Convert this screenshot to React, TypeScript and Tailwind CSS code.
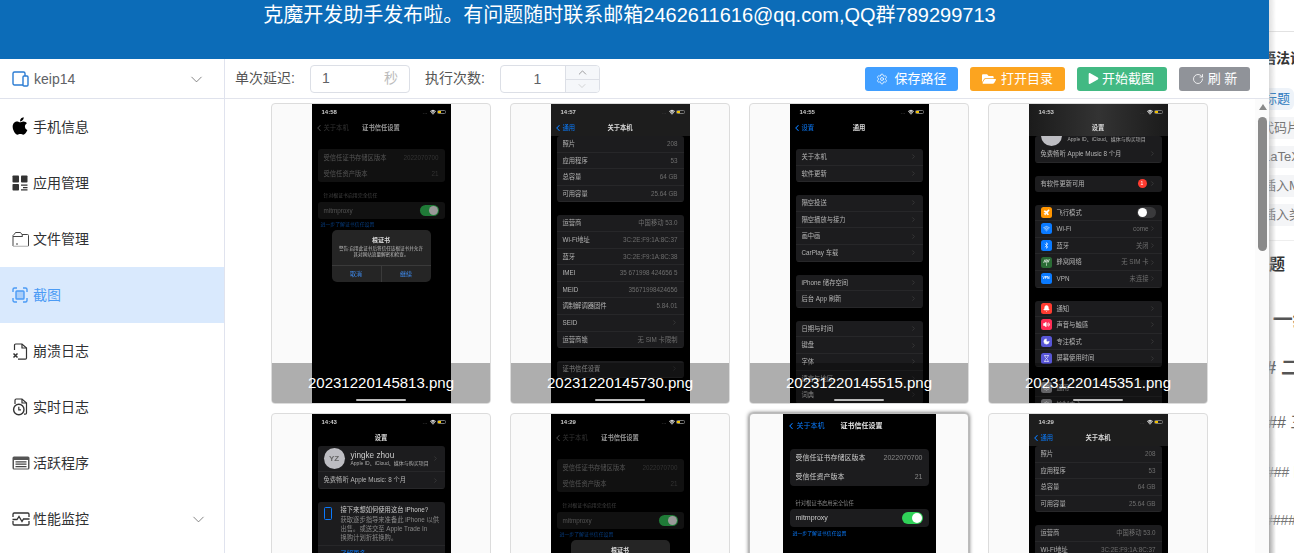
import type { ReactNode } from 'react';
import { ChevronDown, ChevronUp, ChevronLeft, ChevronRight, Settings, RotateCw, Plane, Wifi, Bluetooth, Bell, Volume2, Moon, Hourglass, Antenna } from 'lucide-react';
import { FaApple, FaFolderOpen, FaPlay } from 'react-icons/fa';

/* ---------- sidebar icons ---------- */
const DeviceIcon = () => (
  <svg width="17" height="16" viewBox="0 0 17 16" fill="none" stroke="#2b7cd3" strokeWidth="1.4">
    <path d="M11 14H2.5A1.5 1.5 0 0 1 1 12.5v-10A1.5 1.5 0 0 1 2.5 1h9A1.5 1.5 0 0 1 13 2.5V5" />
    <rect x="11" y="5" width="5" height="10" rx="1" />
  </svg>
);
const AppsIcon = () => (
  <svg width="16" height="16" viewBox="0 0 16 16" fill="#333">
    <rect x="0.5" y="0.5" width="6.5" height="7" rx="0.8" />
    <rect x="9" y="0.5" width="6.5" height="7" rx="0.8" />
    <rect x="0.5" y="9" width="6.5" height="6.5" rx="0.8" />
    <path d="M9 9.5h6.5v1.2H9zM11 12h4.5v1.2H11zM9 14.3h6.5v1.2H9z" />
  </svg>
);
const FolderIcon = () => (
  <svg width="17" height="16" viewBox="0 0 17 16" fill="none" stroke="#444" strokeWidth="1">
    <path d="M1 15V4.5L2.5 3l1-1.5h5L10 3.5h5.5a1 1 0 0 1 1 1V15" />
    <path d="M1 5.5h9.5L10 3.5" />
    <path d="M1 15.3h15.5" stroke="#bbb" strokeWidth="1.2" />
    <path d="M4 13h2" />
  </svg>
);
const ScanIcon = () => (
  <svg width="16" height="16" viewBox="0 0 16 16" fill="none" stroke="#4b9bf5" strokeWidth="1.4">
    <path d="M1 5V2.5A1.5 1.5 0 0 1 2.5 1H5M11 1h2.5A1.5 1.5 0 0 1 15 2.5V5M15 11v2.5a1.5 1.5 0 0 1-1.5 1.5H11M5 15H2.5A1.5 1.5 0 0 1 1 13.5V11" />
    <rect x="4" y="4" width="8" height="8" rx="0.8" fill="#a9cdf8" />
  </svg>
);
const CrashIcon = () => (
  <svg width="16" height="17" viewBox="0 0 16 17" fill="none" stroke="#333" strokeWidth="1.2">
    <path d="M2.5 7V2.2A1.2 1.2 0 0 1 3.7 1H10l4.5 4v10a1.2 1.2 0 0 1-1.2 1.2H6" />
    <path d="M10 1v4h4.5" />
    <path d="M1.5 10.5l4 4M5.5 10.5l-4 4" strokeWidth="1.5" />
  </svg>
);
const ClockFileIcon = () => (
  <svg width="16" height="18" viewBox="0 0 16 18" fill="none" stroke="#333" strokeWidth="1.2">
    <path d="M3 6V2.2A1.2 1.2 0 0 1 4.2 1H10l4.5 4v10a1.2 1.2 0 0 1-1.2 1.2H12" />
    <path d="M10 1v4h4.5" />
    <circle cx="6.8" cy="11.5" r="5.2" strokeWidth="1.4" />
    <path d="M6.8 8.8v3h2.2" />
  </svg>
);
const ListIcon = () => (
  <svg width="18" height="14" viewBox="0 0 18 14" fill="none">
    <rect x="0.5" y="0.5" width="17" height="13" rx="1.5" fill="#555" />
    <rect x="2" y="4" width="14" height="8.5" fill="#fff" />
    <path d="M3.5 5.8h11M3.5 8.2h11M3.5 10.6h11" stroke="#444" strokeWidth="1.2" />
  </svg>
);
const PulseIcon = () => (
  <svg width="18" height="14" viewBox="0 0 18 14" fill="none" stroke="#333" strokeWidth="1.3">
    <path d="M1 5V2.2A1.2 1.2 0 0 1 2.2 1h13.6A1.2 1.2 0 0 1 17 2.2V5M1 9v2.8A1.2 1.2 0 0 0 2.2 13h13.6a1.2 1.2 0 0 0 1.2-1.2V9" />
    <path d="M0.5 7.5H5l2-3 3 5 1.5-2.5h6" />
  </svg>
);

const menu = [
  { label: '手机信息', icon: <FaApple size={20} color="#000" className="-ml-[2px] -mt-[3px]" /> },
  { label: '应用管理', icon: <AppsIcon /> },
  { label: '文件管理', icon: <FolderIcon /> },
  { label: '截图', icon: <ScanIcon />, active: true },
  { label: '崩溃日志', icon: <CrashIcon /> },
  { label: '实时日志', icon: <ClockFileIcon /> },
  { label: '活跃程序', icon: <ListIcon /> },
  { label: '性能监控', icon: <PulseIcon />, arrow: true },
];

function Sidebar() {
  return (
    <aside className="w-[225px] shrink-0 border-r border-[#e0e3ee] bg-white">
      <div className="h-[40px] flex items-center pl-[12px] pr-[18px] pt-[1px] border-b border-[#dfe2ec] text-[14px] text-[#606266]">
        <DeviceIcon />
        <span className="ml-[5px] flex-1">keip14</span>
        <ChevronDown size={19} strokeWidth={1} className="text-[#666]" />
      </div>
      {menu.map((m) => (
        <div
          key={m.label}
          className={
            m.active
              ? 'h-[56px] flex items-center pl-[12px] pr-[16px] text-[14px] bg-[#d9e9fd] text-[#4b9bf5]'
              : 'h-[56px] flex items-center pl-[12px] pr-[16px] text-[14px] text-[#303133]'
          }
        >
          <span className="w-[21px] flex justify-start">{m.icon}</span>
          <span className="flex-1">{m.label}</span>
          {m.arrow && <ChevronDown size={19} strokeWidth={1} className="text-[#666]" />}
        </div>
      ))}
    </aside>
  );
}

/* ---------- toolbar ---------- */
function Toolbar() {
  return (
    <div className="h-[40px] shrink-0 flex items-center pl-[10px] pr-[19px] border-b border-[#e2e4ec] text-[14px] text-[#555]">
      <span>单次延迟:</span>
      <div className="ml-[15px] w-[100px] h-[28px] flex items-center justify-between pl-[11px] pr-[11px] border border-[#dcdfe6] rounded-[4px] text-[#606266]">
        <span>1</span>
        <span className="text-[#bbb]">秒</span>
      </div>
      <span className="ml-[15px]">执行次数:</span>
      <div className="ml-[15px] w-[100px] h-[28px] flex border border-[#dcdfe6] rounded-[4px] text-[#606266] overflow-hidden">
        <span className="flex-1 text-center leading-[26px] pl-[9px]">1</span>
        <div className="w-[34px] flex flex-col border-l border-[#dcdfe6] bg-[#f5f7fa] text-[#777]">
          <div className="h-[15px] flex items-center justify-center border-b border-[#dcdfe6]"><ChevronUp size={13} strokeWidth={1.3} /></div>
          <div className="flex-1 flex items-center justify-center text-[#bbb]"><ChevronDown size={12} strokeWidth={1.2} /></div>
        </div>
      </div>
      <div className="ml-auto flex gap-[12px] text-[13px] text-white">
        <button className="w-[93px] h-[24px] rounded-[3px] bg-[#409eff] flex items-center justify-center gap-[6px]"><Settings size={12} strokeWidth={1.5} />保存路径</button>
        <button className="w-[95px] h-[24px] rounded-[3px] bg-[#fca41f] flex items-center justify-center gap-[5px]"><FaFolderOpen size={14} />打开目录</button>
        <button className="w-[90px] h-[24px] rounded-[3px] bg-[#42b983] flex items-center justify-center gap-[3px] pr-[2px]"><FaPlay size={11} />开始截图</button>
        <button className="w-[71px] h-[24px] rounded-[3px] bg-[#909399] flex items-center justify-center gap-[4px]"><RotateCw size={12} strokeWidth={1.6} />刷 新</button>
      </div>
    </div>
  );
}

/* ---------- phone screenshots ---------- */
function StatusBar({ time }: { time: string }) {
  return (
    <div className="h-[16px] flex items-center justify-between pl-[10px] pr-[5px] text-[6px] font-bold text-[#ccc]">
      <span>{time}</span>
      <span className="flex items-center gap-[1px]">
        <span className="text-[#333] mr-[1px]">...</span>
        <Wifi size={6} strokeWidth={3.5} className="text-white" />
        <span className="w-[9px] h-[4.5px] border border-[#777] rounded-[1.5px] flex">
          <span className="w-[3px] bg-[#f2c200]" />
        </span>
      </span>
    </div>
  );
}

function NavBar({ back, title, dim }: { back: string; title: string; dim?: boolean }) {
  return (
    <div className="relative h-[16px] flex items-center pl-[2px] text-[6.300px]">
      <ChevronLeft size={10} strokeWidth={2.5} className={dim ? 'text-[#444]' : 'text-[#0a7cff]'} />
      <span className={dim ? 'text-[#333]' : 'text-[#0a7cff]'}>{back}</span>
      <span className={dim ? 'absolute left-0 right-0 text-center font-bold text-[#999]' : 'absolute left-0 right-0 text-center font-bold text-[#ddd]'}>{title}</span>
    </div>
  );
}

function Group({ children, dim }: { children: ReactNode; dim?: boolean }) {
  return <div className={dim ? 'mx-[6px] rounded-[3px] bg-[#111] overflow-hidden' : 'mx-[6px] rounded-[3px] bg-[#1c1c1e] overflow-hidden'}>{children}</div>;
}

function Row({ label, value, arrow, dim, icon }: { label: string; value?: string; arrow?: boolean; dim?: boolean; icon?: ReactNode }) {
  return (
    <div className={dim ? 'h-[16.600px] flex items-center pl-[6px] pr-[6px] text-[6.300px] text-[#555]' : 'h-[16.600px] flex items-center pl-[6px] pr-[6px] text-[6.300px] text-[#b4b4b4] border-b border-white/5'}>
      {icon}
      <span className="flex-1 whitespace-nowrap">{label}</span>
      {value && <span className={dim ? 'text-[#333] whitespace-nowrap' : 'text-[#6e6e6e] whitespace-nowrap'}>{value}</span>}
      {arrow && <ChevronRight size={7} strokeWidth={2} className="text-[#4a4a4a] shrink-0" />}
    </div>
  );
}

function Tile({ color, children }: { color: string; children: ReactNode }) {
  return (
    <span className="w-[11px] h-[11px] rounded-[2.500px] mr-[5px] flex items-center justify-center text-white shrink-0" style={{ backgroundColor: color }}>
      {children}
    </span>
  );
}

function Phone({ children }: { children: ReactNode }) {
  return <div className="relative w-[139px] h-[300px] bg-black overflow-hidden blur-[0.450px]">{children}</div>;
}

function TrustPhone({ time }: { time: string }) {
  return (
    <Phone>
      <StatusBar time={time} />
      <NavBar back="关于本机" title="证书信任设置" dim />
      <div className="h-[13px]" />
      <Group dim>
        <Row dim label="受信任证书存储区版本" value="2022070700" />
        <Row dim label="受信任资产版本" value="21" />
      </Group>
      <p className="mt-[8px] h-[12px] leading-[12px] pl-[12px] text-[4.900px] text-[#444]">针对根证书启用完全信任</p>
      <Group dim>
        <div className="h-[17px] flex items-center justify-between pl-[6px] pr-[6px] text-[6.300px] text-[#555]">
          <span>mitmproxy</span>
          <span className="w-[19px] h-[11px] rounded-full bg-[#1f7a37] flex items-center justify-end pr-[1px]">
            <span className="w-[9px] h-[9px] rounded-full bg-[#999]" />
          </span>
        </div>
      </Group>
      <p className="h-[12px] leading-[12px] pl-[9px] text-[4.900px] text-[#063d80]">进一步了解证书信任设置</p>
      <div className="absolute left-[20px] top-[126px] w-[99px] h-[52px] rounded-[5px] bg-[#252525] flex flex-col items-center text-center">
        <p className="mt-[6px] text-[6px] font-bold text-[#ddd]">根证书</p>
        <p className="mt-[1px] px-[6px] text-[4.600px] leading-[6px] text-[#bbb]">警告:启用此证书后将信任该根证书并允许其对网站流量解密和检查。</p>
        <div className="mt-auto w-full h-[17px] flex border-t border-[#3a3a3a] text-[6px] text-[#3f8cf0]">
          <span className="flex-1 leading-[16px] border-r border-[#3a3a3a]">取消</span>
          <span className="flex-1 leading-[16px]">继续</span>
        </div>
      </div>
    </Phone>
  );
}

function AboutPhone({ time }: { time: string }) {
  return (
    <Phone>
      <div className="h-[32px] bg-[#1d1d1d]">
        <StatusBar time={time} />
        <NavBar back="通用" title="关于本机" />
      </div>
      <div className="flex flex-col gap-[13px]">
        <Group>
          <Row label="照片" value="208" />
          <Row label="应用程序" value="53" />
          <Row label="总容量" value="64 GB" />
          <Row label="可用容量" value="25.64 GB" />
        </Group>
        <Group>
          <Row label="运营商" value="中国移动 53.0" />
          <Row label="Wi-Fi地址" value="3C:2E:F9:1A:8C:37" />
          <Row label="蓝牙" value="3C:2E:F9:1A:8C:38" />
          <Row label="IMEI" value="35 671998 424656 5" />
          <Row label="MEID" value="35671998424656" />
          <Row label="调制解调器固件" value="5.84.01" />
          <Row label="SEID" arrow />
          <Row label="运营商锁" value="无 SIM 卡限制" />
        </Group>
        <Group>
          <Row label="证书信任设置" arrow />
        </Group>
      </div>
    </Phone>
  );
}

function GeneralPhone() {
  return (
    <Phone>
      <StatusBar time="14:55" />
      <NavBar back="设置" title="通用" />
      <div className="h-[13px]" />
      <div className="flex flex-col gap-[13px]">
        <Group>
          <Row label="关于本机" arrow />
          <Row label="软件更新" arrow />
        </Group>
        <Group>
          <Row label="隔空投送" arrow />
          <Row label="隔空播放与接力" arrow />
          <Row label="画中画" arrow />
          <Row label="CarPlay 车载" arrow />
        </Group>
        <Group>
          <Row label="iPhone 储存空间" arrow />
          <Row label="后台 App 刷新" arrow />
        </Group>
        <Group>
          <Row label="日期与时间" arrow />
          <Row label="键盘" arrow />
          <Row label="字体" arrow />
          <Row label="语言与地区" arrow />
          <Row label="词典" arrow />
        </Group>
      </div>
    </Phone>
  );
}

function SettingsPhone() {
  return (
    <Phone>
      <div className="h-[32px] bg-gradient-to-r from-[#1b1b1b] via-[#333] to-[#1b1b1b]">
        <StatusBar time="14:53" />
        <div className="h-[16px] text-center leading-[16px] text-[6.300px] font-bold text-[#ddd]">设置</div>
      </div>
      <Group>
        <div className="h-[10px] flex overflow-hidden pl-[6px]">
          <span className="w-[21px] h-[21px] -mt-[11px] rounded-full bg-[#bdbdc2] shrink-0" />
          <span className="ml-[6px] text-[5px] leading-[6px] text-[#aaa] whitespace-nowrap">Apple ID、iCloud、媒体与购买项目</span>
        </div>
        <Row label="免费畅听 Apple Music 8 个月" arrow />
      </Group>
      <div className="h-[13px]" />
      <Group>
        <div className="h-[16px] flex items-center pl-[6px] pr-[6px] text-[6.300px] text-[#b4b4b4]">
          <span className="flex-1">有软件更新可用</span>
          <span className="w-[9px] h-[9px] rounded-full bg-[#ff3b30] text-white text-[5px] text-center leading-[9px] mr-[2px]">1</span>
          <ChevronRight size={7} strokeWidth={2} className="text-[#4a4a4a]" />
        </div>
      </Group>
      <div className="h-[13px]" />
      <Group>
        <div className="h-[16.600px] flex items-center pl-[6px] pr-[6px] text-[6.300px] text-[#b4b4b4] border-b border-white/5">
          <Tile color="#ff9500"><Plane size={7} fill="white" /></Tile>
          <span className="flex-1">飞行模式</span>
          <span className="w-[19px] h-[11px] rounded-full bg-[#3a3a3c] flex items-center pl-[1px]"><span className="w-[9px] h-[9px] rounded-full bg-white" /></span>
        </div>
        <Row icon={<Tile color="#0a7aff"><Wifi size={7} /></Tile>} label="Wi-Fi" value="come" arrow />
        <Row icon={<Tile color="#0a7aff"><Bluetooth size={7} /></Tile>} label="蓝牙" value="关闭" arrow />
        <Row icon={<Tile color="#2a6b35"><Antenna size={7} /></Tile>} label="蜂窝网络" value="无 SIM 卡" arrow />
        <Row icon={<Tile color="#0a7aff"><span className="text-[3.500px] font-bold">VPN</span></Tile>} label="VPN" value="未连接" arrow />
      </Group>
      <div className="h-[13px]" />
      <Group>
        <Row icon={<Tile color="#ff3b30"><Bell size={7} fill="white" /></Tile>} label="通知" arrow />
        <Row icon={<Tile color="#ff2d55"><Volume2 size={7} fill="white" /></Tile>} label="声音与触感" arrow />
        <Row icon={<Tile color="#5856d6"><Moon size={7} fill="white" /></Tile>} label="专注模式" arrow />
        <Row icon={<Tile color="#5856d6"><Hourglass size={7} /></Tile>} label="屏幕使用时间" arrow />
      </Group>
      <div className="h-[13px]" />
      <Group>
        <Row icon={<Tile color="#8e8e93"><Settings size={7} /></Tile>} label="通用" arrow />
        <Row icon={<Tile color="#8e8e93"><Settings size={7} /></Tile>} label="控制中心" arrow />
      </Group>
    </Phone>
  );
}

function ProfilePhone() {
  return (
    <Phone>
      <StatusBar time="14:43" />
      <div className="h-[16px] text-center leading-[16px] text-[6.300px] font-bold text-[#ddd]">设置</div>
      <Group>
        <div className="h-[26.400px] flex items-center pl-[6px] pr-[6px] border-b border-white/5">
          <span className="w-[21px] h-[21px] rounded-full bg-[#bdbdc2] text-[#666] text-[8px] font-bold text-center leading-[21px] shrink-0">YZ</span>
          <span className="ml-[6px] flex-1 min-w-0">
            <span className="block text-[8.200px] leading-[9px] text-[#ccc]">yingke zhou</span>
            <span className="block text-[5px] leading-[6px] text-[#aaa] whitespace-nowrap">Apple ID、iCloud、媒体与购买项目</span>
          </span>
          <ChevronRight size={7} strokeWidth={2} className="text-[#4a4a4a] shrink-0" />
        </div>
        <Row label="免费畅听 Apple Music: 8 个月" arrow />
      </Group>
      <div className="h-[13px]" />
      <Group>
        <div className="flex pl-[6px] pt-[4px] pb-[3px] border-b border-white/5">
          <span className="w-[8px] h-[13px] mt-[1px] mr-[9px] border border-[#0a7aff] rounded-[1.500px] shrink-0" />
          <div className="min-w-0">
            <p className="text-[6.300px] leading-[8px] text-[#ccc] whitespace-nowrap">接下来想如何使用这台 iPhone?</p>
            <p className="mt-[1px] text-[6.300px] leading-[9px] text-[#888] whitespace-nowrap">获取逐步指导来准备此 iPhone 以供</p>
            <p className="text-[6.300px] leading-[9px] text-[#888] whitespace-nowrap">出售。或送交至 Apple Trade In</p>
            <p className="text-[6.300px] leading-[9px] text-[#888] whitespace-nowrap">换购计划折抵换购。</p>
          </div>
        </div>
        <p className="h-[16px] leading-[16px] pl-[23px] text-[6.300px] text-[#0a7cff]">了解更多</p>
      </Group>
    </Phone>
  );
}

function DetailPhone() {
  return (
    <div className="relative w-[153px] h-[330px] bg-black overflow-hidden blur-[0.400px]">
      <div className="relative h-[24px] flex items-center pl-[3px] text-[7px] text-[#0a7cff]">
        <ChevronLeft size={10} strokeWidth={2.5} />
        <span className="ml-[1px]">关于本机</span>
        <span className="ml-[16px] font-bold text-[#e8e8e8]">证书信任设置</span>
      </div>
      <div className="mt-[11px] mx-[7px] rounded-[4px] bg-[#1c1c1e]">
        <div className="h-[18.500px] flex items-center justify-between px-[6px] text-[7px] text-[#ccc]"><span>受信任证书存储区版本</span><span className="text-[#888]">2022070700</span></div>
        <div className="h-[18.500px] flex items-center justify-between px-[6px] text-[7px] text-[#ccc]"><span>受信任资产版本</span><span className="text-[#888]">21</span></div>
      </div>
      <p className="mt-[11px] h-[12px] leading-[12px] pl-[13px] text-[5.300px] text-[#888]">针对根证书启用完全信任</p>
      <div className="mx-[7px] h-[18px] rounded-[4px] bg-[#1c1c1e] flex items-center justify-between pl-[6px] pr-[6px] text-[7px] text-[#ccc]">
        <span>mitmproxy</span>
        <span className="w-[21px] h-[12px] rounded-full bg-[#30d158] flex items-center justify-end pr-[1px]"><span className="w-[10px] h-[10px] rounded-full bg-white" /></span>
      </div>
      <p className="mt-[1px] h-[12px] leading-[12px] pl-[10px] text-[4.900px] text-[#0a7cff]">进一步了解证书信任设置</p>
    </div>
  );
}

function Shot({ name, phone, selected }: { name: string; phone: ReactNode; selected?: boolean }) {
  return (
    <div className={selected ? 'relative h-[301px] flex justify-center rounded-[4px] bg-[#fafafa] border border-[#bbb] shadow-[0_0_4px_#555] overflow-hidden' : 'relative h-[301px] flex justify-center rounded-[4px] bg-[#fafafa] border border-[#dcdcdc] overflow-hidden'}>
      {phone}
      {name && (
        <div className="absolute left-0 right-0 bottom-0 h-[40px] bg-black/30 flex items-center justify-center whitespace-nowrap text-[15px] text-white">
          {name}
          <span className="absolute left-1/2 -translate-x-1/2 bottom-[2px] w-[50px] h-[2px] rounded-full bg-[#bbb]" />
        </div>
      )}
    </div>
  );
}

function Gallery() {
  return (
    <div className="flex-1 min-w-0 overflow-hidden pt-[4px] pl-[46px] pr-[47px]">
      <div className="grid grid-cols-4 gap-x-[19px] gap-y-[9px]">
        <Shot name="20231220145813.png" phone={<TrustPhone time="14:58" />} />
        <Shot name="20231220145730.png" phone={<AboutPhone time="14:57" />} />
        <Shot name="20231220145515.png" phone={<GeneralPhone />} />
        <Shot name="20231220145351.png" phone={<SettingsPhone />} />
        <Shot name="" phone={<ProfilePhone />} />
        <Shot name="" phone={<TrustPhone time="14:29" />} />
        <Shot name="" phone={<DetailPhone />} selected />
        <Shot name="" phone={<AboutPhone time="14:29" />} />
      </div>
    </div>
  );
}

function ScrollBar() {
  return (
    <div className="w-[14px] shrink-0 bg-[#fbfbfb] flex flex-col items-center pl-[3px] pr-[2px] pt-[5px]">
      <div className="w-0 h-0 border-x-[4px] border-x-transparent border-b-[6px] border-b-[#8a8a8a]" />
      <div className="mt-[7px] w-[9px] h-[134px] rounded-full bg-[#8a8a8a]" />
    </div>
  );
}

/* ---------- document sliding in from the right edge ---------- */
function SidePanel() {
  return (
    <div className="relative w-[25px] shrink-0 bg-white overflow-hidden">
      <div className="h-[32px] border-b border-[#e2e2e2]" />
      <p className="mt-[16px] -ml-[7px] whitespace-nowrap text-[14px] font-bold text-[#333]">语法说明</p>
      <div className="mt-[19px] -ml-[6px] flex flex-col gap-[7px] text-[13px] text-[#777] whitespace-nowrap">
        <span className="h-[22px] leading-[22px] pl-[1px] rounded-[6px] bg-[#eef3f9] text-[#2f7bc0]">标题</span>
        <span className="h-[22px] leading-[22px] -ml-[2px] bg-[#f4f5f7]">代码片段</span>
        <span className="h-[22px] leading-[22px] bg-[#f4f5f7]">LaTeX</span>
        <span className="h-[22px] leading-[22px] bg-[#f4f5f7]">插入Markdown</span>
        <span className="h-[22px] leading-[22px] bg-[#f4f5f7]">插入类图</span>
      </div>
      <div className="mt-[14px] border-t border-[#eee]" />
      <p className="mt-[12px] -ml-[16px] whitespace-nowrap text-[16px] font-bold text-[#333]">标题</p>
      <p className="mt-[28px] -ml-[13px] whitespace-nowrap text-[20px] font-bold text-[#555]"># 一级标题</p>
      <p className="mt-[20px] -ml-[3px] whitespace-nowrap text-[18px] font-bold text-[#555]"># 二级</p>
      <p className="mt-[29px] -ml-[1px] whitespace-nowrap text-[16px] text-[#666]">## 三级</p>
      <p className="mt-[27px] -ml-[3px] whitespace-nowrap text-[14px] text-[#777]">### 四级</p>
      <p className="mt-[27px] -ml-[4px] whitespace-nowrap text-[14px] text-[#777]">#### 五级</p>
      <div className="absolute inset-y-0 left-0 w-[7px] bg-gradient-to-r from-[#a8a8a8] to-transparent [mask-image:linear-gradient(to_bottom,#0005,#000)]" />
    </div>
  );
}

export default function App() {
  return (
    <div className="h-[553px] w-[1294px] flex overflow-hidden bg-white font-['Liberation_Sans','Noto_Sans_CJK_SC',sans-serif]">
      <div className="w-[1269px] shrink-0 flex flex-col">
        <header className="h-[59px] shrink-0 bg-[#0c6cb8] text-center text-[20px] leading-[30px] text-white pr-[10px]">
          克魔开发助手发布啦。有问题随时联系邮箱2462611616@qq.com,QQ群789299713
        </header>
        <div className="flex-1 min-h-0 flex">
          <Sidebar />
          <div className="flex-1 min-w-0 flex flex-col">
            <Toolbar />
            <div className="flex-1 min-h-0 flex">
              <Gallery />
              <ScrollBar />
            </div>
          </div>
        </div>
      </div>
      <SidePanel />
    </div>
  );
}
